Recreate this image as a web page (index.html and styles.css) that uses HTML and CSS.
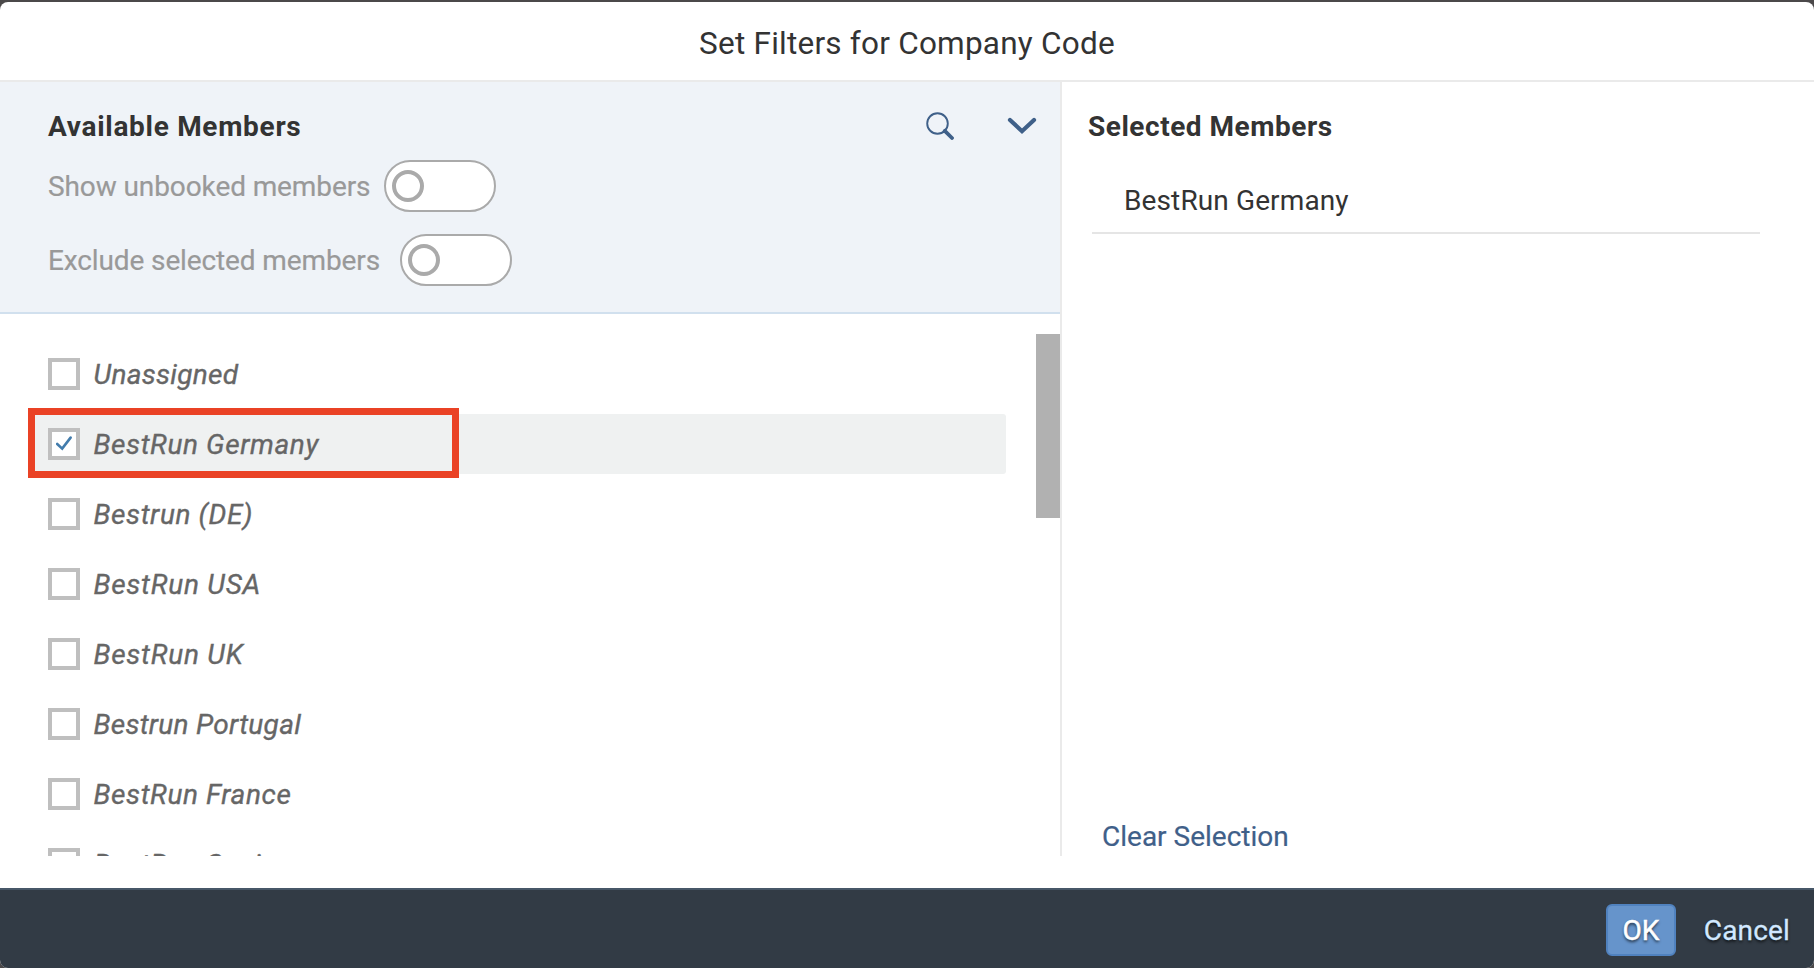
FILE: index.html
```html
<!DOCTYPE html>
<html lang="en">
<head>
<meta charset="utf-8">
<title>Set Filters for Company Code</title>
<link rel="stylesheet" href="styles.css">
</head>
<body>
<div class="dialog">
  <header class="dialog-header"><h1 class="title">Set Filters for Company Code</h1></header>
  <main class="dialog-body">
    <section class="available">
      <div class="filter-panel">
        <div class="panel-head">
          <h2 class="heading heading-available">Available Members</h2>
          <button class="icon-button" aria-label="Search"><svg class="search-icon" viewBox="0 0 28 28"><circle cx="11.5" cy="11.5" r="10.3" fill="none" stroke="currentColor" stroke-width="1.9"/><path d="M18.8 18.8 26 26" stroke="currentColor" stroke-width="3.8" stroke-linecap="round"/></svg></button>
          <button class="icon-button" aria-label="Collapse"><svg class="chevron-icon" viewBox="0 0 30 18"><path d="M3 3 15 14.2 27 3" fill="none" stroke="currentColor" stroke-width="4.2" stroke-linecap="round" stroke-linejoin="miter"/></svg></button>
        </div>
        <div class="option"><span class="option-label label-unbooked">Show unbooked members</span><span class="toggle"><span class="knob"></span></span></div>
        <div class="option"><span class="option-label label-exclude">Exclude selected members</span><span class="toggle"><span class="knob"></span></span></div>
      </div>
      <div class="list-area">
        <ul class="members">
          <li class="member"><span class="checkbox"></span><span class="name name-snug">Unassigned</span></li>
          <li class="member selected"><span class="checkbox"><svg class="check" viewBox="0 0 16 15"><path d="M1.2 8 6.2 12.6 14.6 1.6" fill="none" stroke="currentColor" stroke-width="2.6" stroke-linecap="round"/></svg></span><span class="name">BestRun Germany</span><span class="highlight"></span></li>
          <li class="member"><span class="checkbox"></span><span class="name">Bestrun (DE)</span></li>
          <li class="member"><span class="checkbox"></span><span class="name name-loose">BestRun USA</span></li>
          <li class="member"><span class="checkbox"></span><span class="name name-loose">BestRun UK</span></li>
          <li class="member"><span class="checkbox"></span><span class="name name-snug">Bestrun Portugal</span></li>
          <li class="member"><span class="checkbox"></span><span class="name">BestRun France</span></li>
          <li class="member"><span class="checkbox"></span><span class="name">BestRun Spain</span></li>
        </ul>
        <div class="scroll-track"><div class="scroll-thumb"></div></div>
      </div>
    </section>
    <section class="chosen">
      <h2 class="heading heading-selected">Selected Members</h2>
      <ul class="chosen-list"><li class="chosen-item"><span class="chosen-name">BestRun Germany</span></li></ul>
      <a class="clear">Clear Selection</a>
    </section>
  </main>
  <footer class="dialog-footer">
    <button class="ok">OK</button>
    <button class="cancel">Cancel</button>
  </footer>
</div>
</body>
</html>
```
FILE: styles.css
```css
* { box-sizing: border-box; }
body { margin: 0; padding-top: 2px; height: 968px; overflow: hidden; background: #4b494a; color: #333; font-family: Roboto, "Noto Sans", sans-serif; font-size: 28px; line-height: 32px; }
h1, h2, ul { margin: 0; padding: 0; list-style: none; }
button { border: 0; padding: 0; background: none; font: inherit; color: inherit; text-shadow: inherit; }
.dialog { height: 966px; display: flex; flex-direction: column; background: #fff; border-radius: 8px; overflow: hidden; }
.dialog-header { height: 80px; flex: none; border-bottom: 2px solid #eaeaea; display: flex; justify-content: center; padding-top: 25px; }
.title { font-size: 31.5px; line-height: 34px; font-weight: 400; letter-spacing: .23px; white-space: nowrap; }
.dialog-body { height: 774px; flex: none; display: flex; margin-bottom: 32px; }
.available { width: 1062px; flex: none; border-right: 2px solid #eaeaea; display: flex; flex-direction: column; }
.filter-panel { height: 232px; flex: none; background: #eff3f8; border-bottom: 2px solid #d1e0ee; padding: 28px 23px 0 48px; }
.panel-head { display: flex; align-items: center; height: 34px; margin-bottom: 16px; }
.heading { font-size: 28px; line-height: 32px; font-weight: 700; letter-spacing: .53px; white-space: nowrap; }
.heading-available { flex: 1; letter-spacing: .7px; }
.icon-button { color: #3f6089; display: flex; margin: -2px 0 0 53px; }
.search-icon { width: 28px; height: 28px; }
.chevron-icon { width: 30px; height: 18px; }
.option { display: flex; align-items: center; height: 52px; margin-bottom: 22px; color: #999; }
.option-label { white-space: nowrap; flex: none; padding-top: 2px; -webkit-text-stroke: .2px currentColor; }
.label-unbooked { width: 336px; letter-spacing: -.1px; }
.label-exclude { width: 352px; letter-spacing: -.12px; }
.toggle { width: 112px; height: 52px; border: 2px solid #aaa; border-radius: 26px; background: #fff; display: flex; align-items: center; padding-left: 6px; }
.knob { width: 32px; height: 32px; border: 4px solid #aaa; border-radius: 50%; }
.list-area { flex: 1; min-height: 0; overflow: hidden; display: flex; }
.members { width: 1006px; padding: 25px 0 0 28px; }
.member { height: 70px; display: flex; align-items: center; padding-left: 20px; color: #666; font-style: italic; }
.checkbox { width: 32px; height: 32px; flex: none; border: 4px solid #bfbfbf; background: #fff; margin-right: 13.5px; }
.name { white-space: nowrap; padding-top: 2px; letter-spacing: .6px; -webkit-text-stroke: .35px currentColor; }
.name-snug { letter-spacing: .28px; }
.name-loose { letter-spacing: .75px; }
.check { display: block; width: 16px; height: 15px; margin: 4px 0 0 4px; color: #427cac; }
.selected { position: relative; z-index: 0; }
.selected::before { content: ""; position: absolute; z-index: -1; inset: 5px 0 5px 4px; background: #eff1f1; border-radius: 3px; }
.highlight { position: absolute; left: 0; top: -1px; width: 431px; height: 70px; border: 7px solid #ea4225; }
.scroll-track { width: 54px; padding: 20px 0 0 30px; }
.scroll-thumb { height: 184px; background: #b1b1b1; }
.chosen { flex: 1; padding: 29px 54px 0 30px; display: flex; flex-direction: column; }
.heading-selected { margin-left: -4px; }
.chosen-item { height: 91px; padding: 42px 0 0 32px; border-bottom: 2px solid #e5e5e5; }
.chosen-name { letter-spacing: .12px; }
.clear { margin: auto 0 3px 10px; color: #3f6089; white-space: nowrap; -webkit-text-stroke: .2px currentColor; }
.dialog-footer { flex: 1; background: #323b45; border-top: 2px solid #475768; display: flex; align-items: flex-start; justify-content: flex-end; padding: 14px 24px 0 0; text-shadow: 0 2px 3px rgba(0,0,0,.7); }
.ok { width: 70px; height: 52px; padding-top: 2px; border: 2px solid #5082bf; border-radius: 6px; background: #6694cb; color: #fff; -webkit-text-stroke: .5px currentColor; }
.cancel { height: 52px; padding-top: 2px; margin-left: 28px; color: #d1e8ff; letter-spacing: .15px; -webkit-text-stroke: .3px currentColor; }
```
